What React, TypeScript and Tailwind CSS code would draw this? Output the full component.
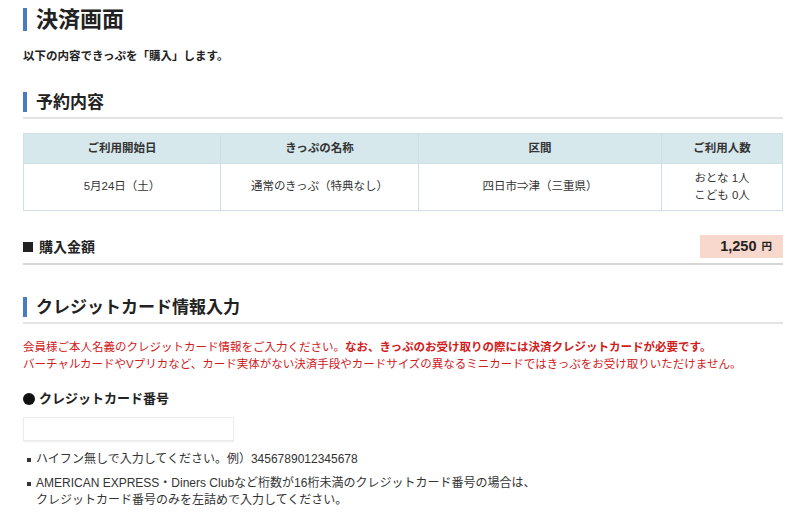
import React from "react";

const font = { fontFamily: '"Liberation Sans", "Noto Sans CJK JP", "Noto Sans", sans-serif' };

interface Row {
  date: string;
  name: string;
  section: string;
  people: string[];
}

const rows: Row[] = [
  {
    date: "5月24日（土）",
    name: "通常のきっぷ（特典なし）",
    section: "四日市⇒津（三重県）",
    people: ["おとな 1人", "こども 0人"],
  },
];

const SectionTitle: React.FC<{ title: string }> = ({ title }) => (
  <div>
    <div className="flex h-[20px] items-center border-l-4 border-[#4a7bc0] pl-[9px] text-[17px] font-bold leading-none text-[#222]">
      {title}
    </div>
    <div className="mt-[5px] h-[2px] bg-[#e3e3e3]" />
  </div>
);

const App: React.FC = () => {
  return (
    <div className="min-h-[512px] w-[800px] bg-white pl-[23px] pr-[17px] text-[#333]" style={font}>
      {/* Page title */}
      <div className="pt-[8px]">
        <div className="flex h-[23px] items-center border-l-4 border-[#4a7bc0] pl-[9px] text-[22px] font-bold leading-none text-[#222]">
          決済画面
        </div>
      </div>

      <p className="mt-[17px] text-[11.5px] font-bold leading-[17px] text-[#222]">
        以下の内容できっぷを「購入」します。
      </p>

      {/* Reservation */}
      <div className="mt-[27px]">
        <SectionTitle title="予約内容" />
      </div>

      <table className="mt-[14px] w-full border-collapse text-[11.5px] text-[#333]">
        <thead>
          <tr className="h-[30px] bg-[#d6e8ec]">
            <th className="w-[197px] border border-[#cde0e5] font-bold">ご利用開始日</th>
            <th className="w-[198px] border border-[#cde0e5] font-bold">きっぷの名称</th>
            <th className="w-[243px] border border-[#cde0e5] font-bold">区間</th>
            <th className="border border-[#cde0e5] font-bold">ご利用人数</th>
          </tr>
        </thead>
        <tbody>
          {rows.map((row) => (
            <tr key={row.date} className="h-[47px]">
              <td className="border border-[#cde0e5] text-center">{row.date}</td>
              <td className="border border-[#cde0e5] text-center">{row.name}</td>
              <td className="border border-[#cde0e5] text-center">{row.section}</td>
              <td className="border border-[#cde0e5] text-center leading-[17px]">
                {row.people.map((p) => (
                  <div key={p}>{p}</div>
                ))}
              </td>
            </tr>
          ))}
        </tbody>
      </table>

      {/* Amount */}
      <div className="mt-[24px]">
        <div className="flex h-[23px] items-center justify-between">
          <div className="flex items-center text-[14px] font-bold leading-none text-[#222]">
            <span className="mr-[6px] inline-block h-[10px] w-[10px] bg-[#222]" />
            購入金額
          </div>
          <div className="flex h-[23px] w-[83px] items-center justify-end bg-[#f8d8cc] pr-[11px] font-bold text-[#222]">
            <span className="text-[14.5px]">1,250</span>
            <span className="ml-[5px] text-[10.5px]">円</span>
          </div>
        </div>
        <div className="mt-[5px] h-[2px] bg-[#d6d6d6]" />
      </div>

      {/* Credit card */}
      <div className="mt-[32px]">
        <SectionTitle title="クレジットカード情報入力" />
      </div>

      <div className="mt-[15px] text-[11.5px] leading-[17px] text-[#d0201c]">
        <p>
          会員様ご本人名義のクレジットカード情報をご入力ください。
          <span className="font-bold">なお、きっぷのお受け取りの際には決済クレジットカードが必要です。</span>
        </p>
        <p>バーチャルカードやVプリカなど、カード実体がない決済手段やカードサイズの異なるミニカードではきっぷをお受け取りいただけません。</p>
      </div>

      <div className="mt-[17px] flex items-center text-[13px] font-bold leading-[18px] text-[#222]">
        <span className="mr-[4px] inline-block h-[12px] w-[12px] rounded-full bg-[#111]" />
        クレジットカード番号
      </div>

      <input
        type="text"
        className="mt-[9px] block h-[24px] w-[211px] border border-[#ececec] bg-white px-2 text-[12px] shadow-[0_1px_1px_rgba(0,0,0,0.06)] outline-none"
      />

      <ul className="mt-[10px] text-[12px] leading-[17px] text-[#333]">
        <li className="flex">
          <span className="ml-[4px] mr-[5px] mt-[7px] inline-block h-[4px] w-[4px] shrink-0 bg-[#333]" />
          <span>ハイフン無しで入力してください。例）3456789012345678</span>
        </li>
        <li className="mt-[7px] flex">
          <span className="ml-[4px] mr-[5px] mt-[7px] inline-block h-[4px] w-[4px] shrink-0 bg-[#333]" />
          <span>
            AMERICAN EXPRESS・Diners Clubなど桁数が16桁未満のクレジットカード番号の場合は、
            <br />
            クレジットカード番号のみを左詰めで入力してください。
          </span>
        </li>
      </ul>
    </div>
  );
};

export default App;
